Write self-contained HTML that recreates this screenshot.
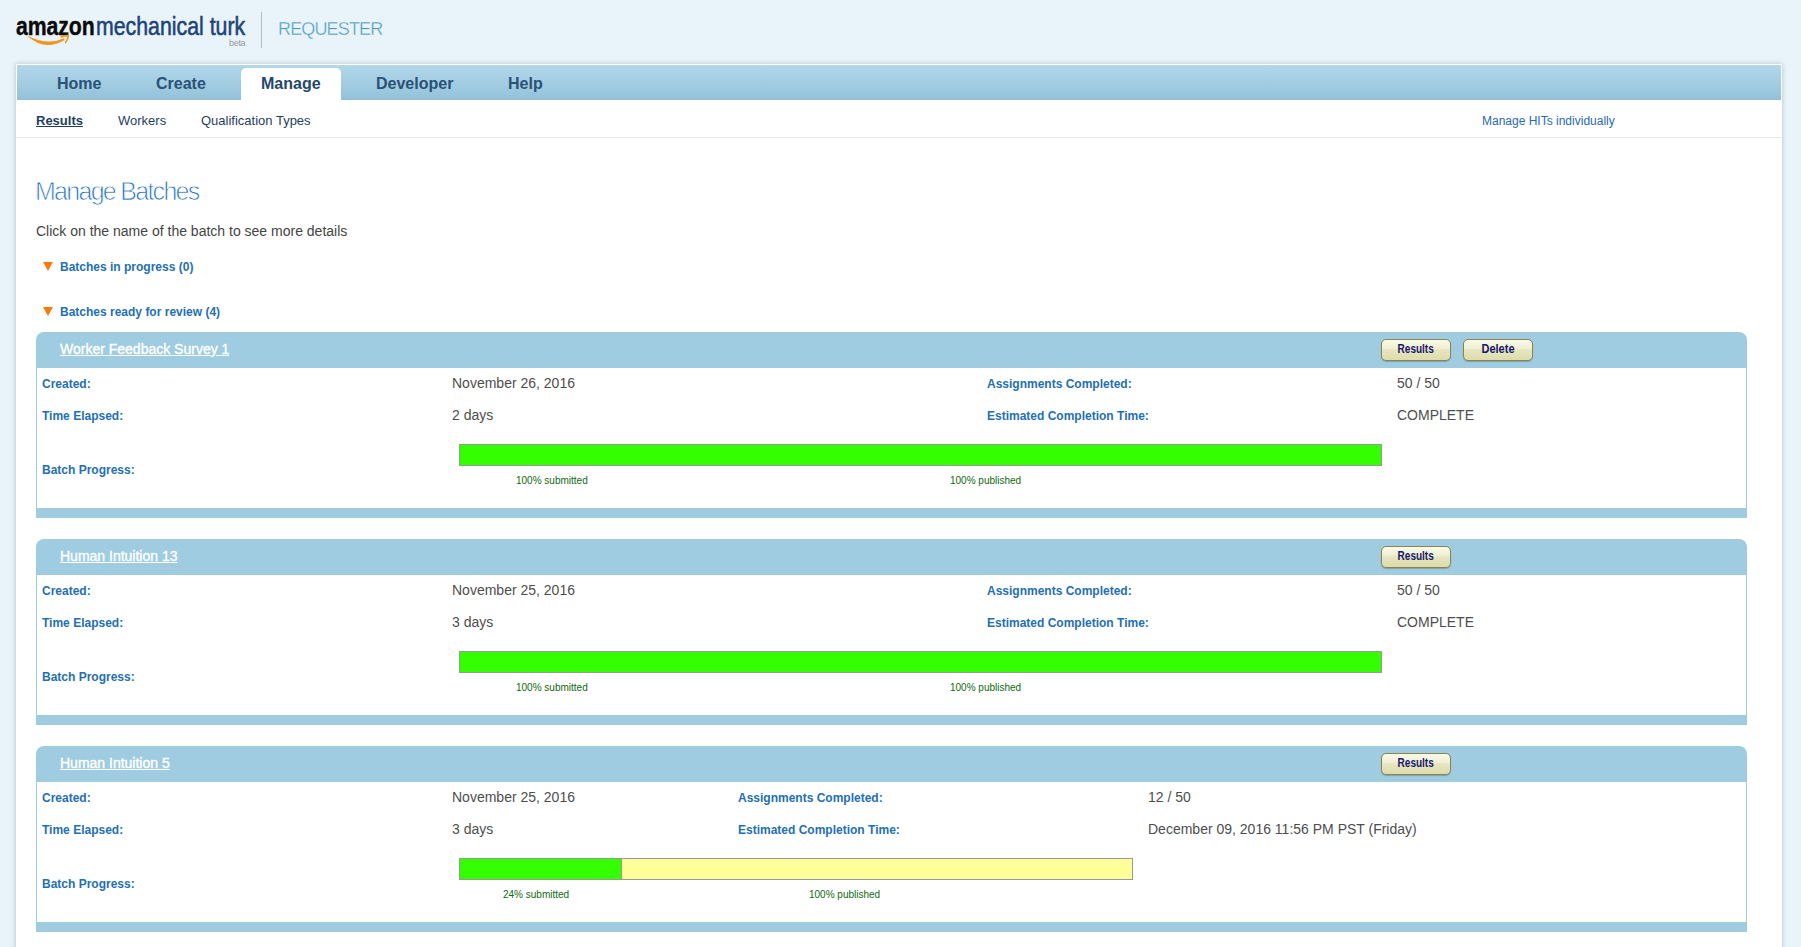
<!DOCTYPE html>
<html>
<head>
<meta charset="utf-8">
<title>Amazon Mechanical Turk - Manage Batches</title>
<style>
html,body{margin:0;padding:0;}
body{width:1801px;height:947px;overflow:hidden;background:#e9f4fa;font-family:"Liberation Sans",Arial,Helvetica,sans-serif;position:relative;color:#444;}
.abs{position:absolute;white-space:nowrap;line-height:1;}
#logo-amazon{left:16px;top:14px;font-size:25px;font-weight:bold;color:#0a0a0a;transform-origin:0 0;transform:scaleX(0.85);letter-spacing:-0.1px;-webkit-text-stroke:0.4px #0a0a0a;}
#logo-mt{left:96px;top:14px;font-size:25px;color:#1f4378;transform-origin:0 0;transform:scaleX(0.852);-webkit-text-stroke:0.55px #1f4378;}
#beta{left:229px;top:39px;font-size:9px;color:#999;letter-spacing:-0.3px;}
#divider{position:absolute;left:261px;top:12px;width:1px;height:36px;background:#b4babd;}
#requester{left:278px;top:20px;font-size:18px;color:#4a98c0;letter-spacing:-0.85px;-webkit-text-stroke:0.4px #e9f4fa;}
#main{position:absolute;left:16px;top:64px;width:1766px;height:900px;background:#fff;box-shadow:0 0 5px rgba(100,120,130,0.42);}
#nav{position:absolute;left:1px;top:1px;right:1px;height:35px;background:linear-gradient(#b1d7ea,#a2cce1 55%,#93c1da);}
.tab{position:absolute;top:1px;height:35px;line-height:36px;font-size:16px;font-weight:bold;color:#2a5176;white-space:nowrap;}
#tab-active{position:absolute;left:224px;top:3px;width:100px;height:33px;background:#fff;border-radius:5px 5px 0 0;}
.sub{top:50px;font-size:13px;color:#1f3f5f;}
#subline{position:absolute;left:0;right:0;top:73px;height:1px;background:#e6e9eb;}
h1{position:absolute;margin:0;left:19px;top:115px;font-size:25px;font-weight:normal;color:#2a72c0;-webkit-text-stroke:0.75px #fff;letter-spacing:-1.72px;line-height:1;white-space:nowrap;}
.sec{font-size:12px;font-weight:bold;color:#246fb4;}
.tri{position:absolute;width:0;height:0;border-left:5px solid transparent;border-right:5px solid transparent;border-top:9px solid #fb7a0a;}
.batch{position:absolute;left:20px;width:1711px;height:186px;}
.bhead{position:absolute;left:0;top:0;right:0;height:36px;background:#a0cce2;border-radius:8px 8px 0 0;}
.bbody{position:absolute;left:0;top:36px;right:0;height:140px;border-left:1px solid #a0cce2;border-right:1px solid #a0cce2;box-sizing:border-box;}
.bfoot{position:absolute;left:0;right:0;top:176px;height:10px;background:#a0cce2;}
.bname{left:24px;top:10px;font-size:14px;color:#fff;text-decoration:underline;-webkit-text-stroke:0.35px #fff;}
.lbl{font-size:12px;font-weight:bold;color:#246fb4;}
.val{font-size:14px;color:#4e4e4e;}
.bar{position:absolute;top:112px;height:22px;box-sizing:border-box;border:1px solid #999;background:#ffff99;}
.bar i{position:absolute;left:0;top:0;bottom:0;background:#33ff00;display:block;}
.pct{font-size:10px;color:#0f6a0f;top:144px;}
.btn{position:absolute;top:7px;height:22px;box-sizing:border-box;border:1px solid #8a8450;border-radius:5px;background:linear-gradient(#fafae8,#f0f0d4 40%,#e6e5bf 52%,#dddcab);font-size:12px;font-weight:bold;color:#17176e;text-align:center;line-height:18px;box-shadow:0 1px 1px rgba(60,60,40,0.3);white-space:nowrap;}
.btn span{display:inline-block;transform-origin:50% 50%;}
</style>
</head>
<body>
<div id="logo-amazon" class="abs">amazon</div>
<svg class="abs" style="left:26px;top:34px" width="46" height="13" viewBox="0 0 46 13"><path d="M0.2,0.9 Q21,12.3 38,4.3 L38.7,5.9 Q18.5,18.3 0.2,0.9 Z" fill="#f7941e"/><path d="M35.3,2.9 Q39.5,1.3 42.3,1.7 Q42,5.2 39.7,8.5" fill="none" stroke="#f7941e" stroke-width="1.7" stroke-linejoin="round" stroke-linecap="round"/></svg>
<div id="logo-mt" class="abs">mechanical turk</div>
<div id="beta" class="abs">beta</div>
<div id="divider"></div>
<div id="requester" class="abs">REQUESTER</div>

<div id="main">
  <div id="nav">
    <div id="tab-active"></div>
    <div class="tab" style="left:40px">Home</div>
    <div class="tab" style="left:139px">Create</div>
    <div class="tab" style="left:244px;color:#23486c">Manage</div>
    <div class="tab" style="left:359px">Developer</div>
    <div class="tab" style="left:491px">Help</div>
  </div>
  <div class="abs sub" style="left:20px;font-weight:bold;text-decoration:underline">Results</div>
  <div class="abs sub" style="left:102px">Workers</div>
  <div class="abs sub" style="left:185px">Qualification Types</div>
  <div class="abs" style="left:1466px;top:51px;font-size:12px;color:#2a6ab0">Manage HITs individually</div>
  <div id="subline"></div>

  <h1>Manage Batches</h1>
  <div class="abs" style="left:20px;top:160px;font-size:14px;color:#444">Click on the name of the batch to see more details</div>

  <div class="tri" style="left:27px;top:198px"></div>
  <div class="abs sec" style="left:44px;top:197px">Batches in progress (0)</div>
  <div class="tri" style="left:27px;top:243px"></div>
  <div class="abs sec" style="left:44px;top:242px">Batches ready for review (4)</div>

  <div class="batch" style="top:268px">
    <div class="bhead">
      <div class="abs bname">Worker Feedback Survey 1</div>
      <div class="btn" style="left:1345px;width:70px"><span style="transform:scaleX(0.835)">Results</span></div>
      <div class="btn" style="left:1427px;width:70px"><span style="transform:scaleX(0.915)">Delete</span></div>
    </div>
    <div class="bbody"></div>
    <div class="abs lbl" style="left:6px;top:46px">Created:</div>
    <div class="abs val" style="left:416px;top:44px">November 26, 2016</div>
    <div class="abs lbl" style="left:951px;top:46px">Assignments Completed:</div>
    <div class="abs val" style="left:1361px;top:44px">50 / 50</div>
    <div class="abs lbl" style="left:6px;top:78px">Time Elapsed:</div>
    <div class="abs val" style="left:416px;top:76px">2 days</div>
    <div class="abs lbl" style="left:951px;top:78px">Estimated Completion Time:</div>
    <div class="abs val" style="left:1361px;top:76px">COMPLETE</div>
    <div class="abs lbl" style="left:6px;top:132px">Batch Progress:</div>
    <div class="bar" style="left:423px;width:923px"><i style="width:100%"></i></div>
    <div class="abs pct" style="left:480px">100% submitted</div>
    <div class="abs pct" style="left:914px">100% published</div>
    <div class="bfoot"></div>
  </div>

  <div class="batch" style="top:475px">
    <div class="bhead">
      <div class="abs bname">Human Intuition 13</div>
      <div class="btn" style="left:1345px;width:70px"><span style="transform:scaleX(0.835)">Results</span></div>
    </div>
    <div class="bbody"></div>
    <div class="abs lbl" style="left:6px;top:46px">Created:</div>
    <div class="abs val" style="left:416px;top:44px">November 25, 2016</div>
    <div class="abs lbl" style="left:951px;top:46px">Assignments Completed:</div>
    <div class="abs val" style="left:1361px;top:44px">50 / 50</div>
    <div class="abs lbl" style="left:6px;top:78px">Time Elapsed:</div>
    <div class="abs val" style="left:416px;top:76px">3 days</div>
    <div class="abs lbl" style="left:951px;top:78px">Estimated Completion Time:</div>
    <div class="abs val" style="left:1361px;top:76px">COMPLETE</div>
    <div class="abs lbl" style="left:6px;top:132px">Batch Progress:</div>
    <div class="bar" style="left:423px;width:923px"><i style="width:100%"></i></div>
    <div class="abs pct" style="left:480px">100% submitted</div>
    <div class="abs pct" style="left:914px">100% published</div>
    <div class="bfoot"></div>
  </div>

  <div class="batch" style="top:682px">
    <div class="bhead">
      <div class="abs bname">Human Intuition 5</div>
      <div class="btn" style="left:1345px;width:70px"><span style="transform:scaleX(0.835)">Results</span></div>
    </div>
    <div class="bbody"></div>
    <div class="abs lbl" style="left:6px;top:46px">Created:</div>
    <div class="abs val" style="left:416px;top:44px">November 25, 2016</div>
    <div class="abs lbl" style="left:702px;top:46px">Assignments Completed:</div>
    <div class="abs val" style="left:1112px;top:44px">12 / 50</div>
    <div class="abs lbl" style="left:6px;top:78px">Time Elapsed:</div>
    <div class="abs val" style="left:416px;top:76px">3 days</div>
    <div class="abs lbl" style="left:702px;top:78px">Estimated Completion Time:</div>
    <div class="abs val" style="left:1112px;top:76px">December 09, 2016 11:56 PM PST (Friday)</div>
    <div class="abs lbl" style="left:6px;top:132px">Batch Progress:</div>
    <div class="bar" style="left:423px;width:674px"><i style="width:161px;border-right:1px solid #999"></i></div>
    <div class="abs pct" style="left:467px">24% submitted</div>
    <div class="abs pct" style="left:773px">100% published</div>
    <div class="bfoot"></div>
  </div>
</div>
</body>
</html>
